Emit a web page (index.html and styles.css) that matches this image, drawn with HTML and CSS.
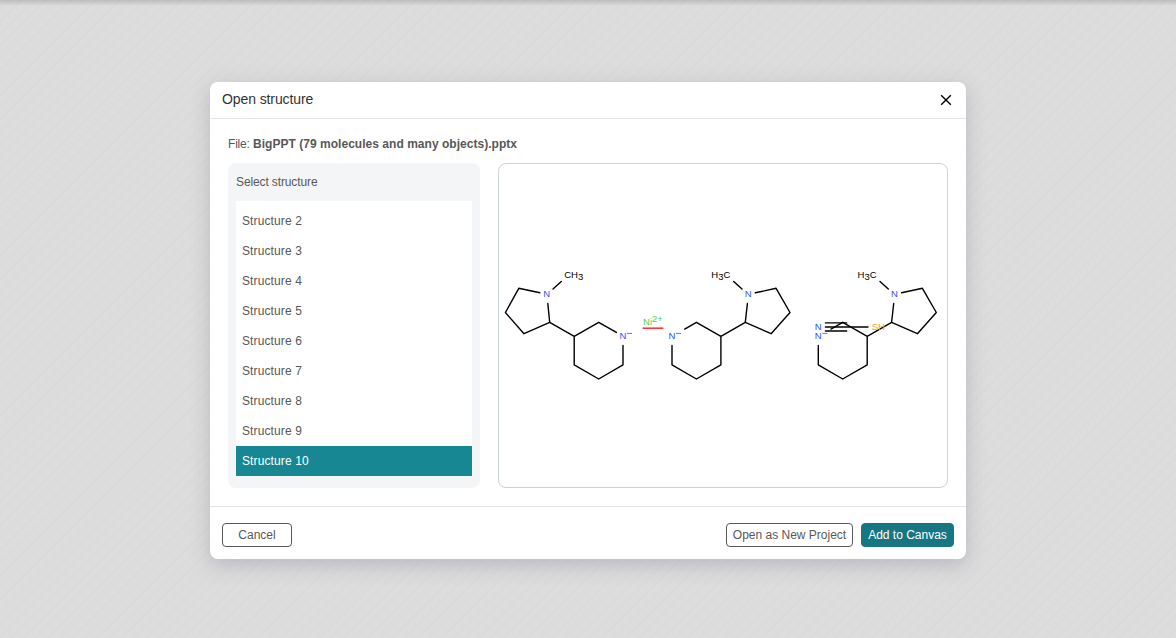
FILE: index.html
```html
<!DOCTYPE html>
<html lang="en">
<head>
<meta charset="utf-8">
<title>Open structure</title>
<link rel="stylesheet" href="styles.css">
</head>
<body>
<div class="backdrop">
  <section class="dialog" role="dialog" aria-labelledby="dialog-title">
    <header class="dialog-header">
      <h1 class="dialog-title" id="dialog-title">Open structure</h1>
      <button class="close-button" aria-label="Close">
        <svg width="12" height="12" viewBox="0 0 12 12"><path d="M1.2 1.2L10.8 10.8M10.8 1.2L1.2 10.8"/></svg>
      </button>
    </header>
    <div class="dialog-body">
      <p class="file-name"><span class="file-label">File:</span> <strong>BigPPT (79 molecules and many objects).pptx</strong></p>
      <div class="panels">
        <div class="picker">
          <h2 class="picker-title">Select structure</h2>
          <ul class="structure-list">
            <li class="structure">Structure 2</li>
            <li class="structure">Structure 3</li>
            <li class="structure">Structure 4</li>
            <li class="structure">Structure 5</li>
            <li class="structure">Structure 6</li>
            <li class="structure">Structure 7</li>
            <li class="structure">Structure 8</li>
            <li class="structure">Structure 9</li>
            <li class="structure selected">Structure 10</li>
          </ul>
        </div>
        <div class="preview">
          <svg class="molecules" width="448" height="323" viewBox="499 164 448 323">
            <g class="bonds">
              <path d="M539.8 292.8L518.8 288.3L505.4 312.5L524 333.7L549.7 322.3L547.8 303.5"/>
              <path d="M553 289.1L561.3 281.4"/>
              <path d="M549.7 322.3L574.2 336.3L598.7 322.3L616.4 332.4M623 345.5V364.8L598.7 379L574.2 364.8V336.3"/>
            </g>
            <g id="right-fragment" class="bonds">
              <path d="M755.3 292.8L776.1 288.3L790 312.5L771.1 333.7L745.3 322.3L747.4 303.5"/>
              <path d="M742 289.1L733.7 281.4"/>
              <path d="M745.3 322.3L720.9 336.3L696.4 322.3L684.7 329.1M672 345.5V364.8L696.4 379L720.9 364.8V336.3"/>
            </g>
            <use href="#right-fragment" x="146.3"/>
            <path class="bonds" d="M825.4 322.9H846.7M825.4 327H868M825.4 331H846.7"/>
            <path class="highlight" d="M642.6 328.2H663.4"/>
            <g class="atoms">
              <text x="564.2" y="278">CH<tspan dy="2">3</tspan></text>
              <text x="711.3" y="278">H<tspan dy="2">3</tspan><tspan dy="-2">C</tspan></text>
              <text x="857.6" y="278">H<tspan dy="2">3</tspan><tspan dy="-2">C</tspan></text>
              <g class="nitrogen">
                <text x="543.2" y="297.2">N</text>
                <text x="744.7" y="297.2">N</text>
                <text x="891" y="297.2">N</text>
                <text x="619.4" y="339.4">N</text>
                <text x="668.5" y="339.4">N</text>
                <text x="814.8" y="339.4">N</text>
                <text x="814.8" y="330.3">N</text>
                <path class="charge" d="M627 333.4H632M676.1 333.4H681.1M822.4 333.4H827.4"/>
              </g>
              <text class="nickel" x="643.1" y="325.3">Ni<tspan dy="-3">2+</tspan></text>
              <text class="sulfur" x="871.7" y="330.3">SH</text>
            </g>
          </svg>
        </div>
      </div>
    </div>
    <footer class="dialog-footer">
      <button class="button cancel">Cancel</button>
      <button class="button open">Open as New Project</button>
      <button class="button add">Add to Canvas</button>
    </footer>
  </section>
</div>
</body>
</html>
```
FILE: styles.css
```css
* { box-sizing: border-box; }
body {
  margin: 0;
  font-family: "Liberation Sans", Arial, sans-serif;
  font-size: 12px;
  color: #585858;
}
.backdrop {
  height: 638px;
  padding-top: 82px;
  overflow: hidden;
  background:
    linear-gradient(rgba(0, 0, 0, .14), rgba(0, 0, 0, 0)) 0 0 / 100% 6px no-repeat,
    repeating-linear-gradient(135deg, #dddddd 0, #dcdcdc 5px, #dadada 7px, #dddddd 8.7px);
}
.dialog {
  width: 756px;
  height: 477px;
  margin: 0 auto;
  display: flex;
  flex-direction: column;
  background: #fff;
  border-radius: 8px;
  box-shadow: 0 6px 20px rgba(103, 104, 132, .3);
}
.dialog-header {
  height: 37px;
  padding: 0 12px;
  display: flex;
  align-items: center;
  justify-content: space-between;
  border-bottom: 1px solid #e1e5ea;
}
.dialog-title {
  margin: 0;
  padding-bottom: 2px;
  font-size: 14px;
  font-weight: 400;
  letter-spacing: -.1px;
  color: #333;
}
.close-button {
  display: flex;
  padding: 0 2px 0 0;
  border: 0;
  background: none;
}
.close-button svg { stroke: #000; stroke-width: 1.4; fill: none; }
.dialog-body {
  flex: 1;
  padding: 18px;
}
.file-name { margin: 0 0 11px; line-height: 15px; }
.file-label { letter-spacing: -.2px; }
.file-name strong { letter-spacing: .03px; }
.panels { display: flex; gap: 18px; height: 325px; }
.picker {
  width: 252px;
  padding: 12px 8px;
  border-radius: 8px;
  background: #f3f5f7;
}
.picker-title {
  margin: 0 0 11px;
  font-size: 12px;
  line-height: 15px;
  font-weight: 400;
  letter-spacing: -.12px;
}
.structure-list {
  margin: 0;
  padding: 5px 0 0;
  list-style: none;
  background: #fff;
}
.structure { height: 30px; padding-left: 6px; line-height: 30px; letter-spacing: .12px; }
.selected { background: #188794; color: #fff; }
.preview {
  flex: 1;
  border: 1px solid #cad3dd;
  border-radius: 8px;
}
.molecules { display: block; }
.bonds { fill: none; stroke: #000; stroke-width: 1.4; stroke-linecap: round; stroke-linejoin: round; }
.highlight { stroke: #ff3535; stroke-width: 1.6; }
.atoms { font-size: 9.5px; fill: #000; }
.nitrogen { fill: #3050f8; }
.charge { stroke: #3050f8; stroke-width: .8; }
.nickel { fill: #50d050; }
.sulfur { fill: #d9a62e; }
.dialog-footer {
  height: 53px;
  padding: 4px 12px 0;
  display: flex;
  align-items: center;
  gap: 8px;
  border-top: 1px solid #e1e5ea;
}
.button {
  height: 24px;
  padding: 0;
  border: 1px solid #585858;
  border-radius: 4px;
  background: #fff;
  color: #585858;
  font: 12px "Liberation Sans", Arial, sans-serif;
}
.cancel { width: 70px; margin-right: auto; }
.open { width: 127px; }
.add { width: 93px; border-color: #167782; background: #167782; color: #fff; }
```
